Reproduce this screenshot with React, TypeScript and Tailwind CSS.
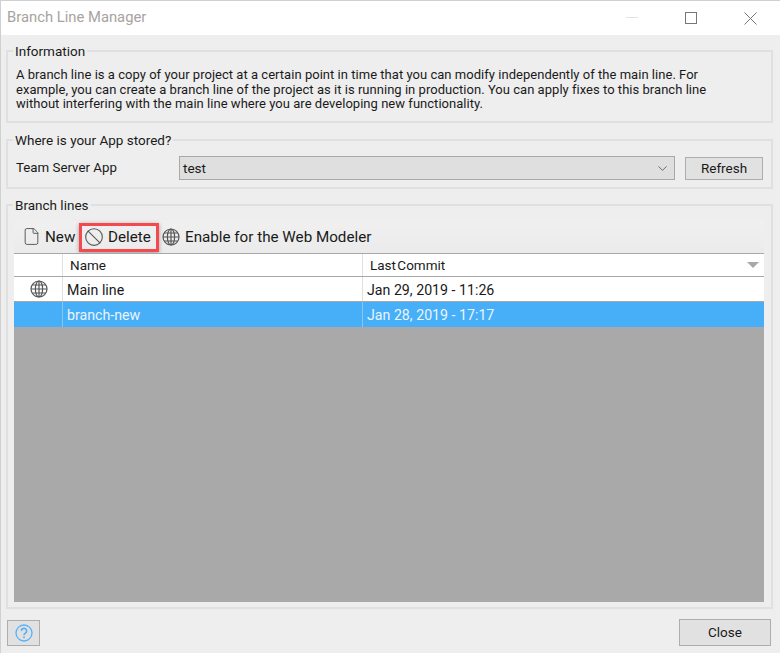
import { ChevronDown, File, Ban } from 'lucide-react';
import type { ReactNode } from 'react';

function GlobeIcon() {
  return (
    <svg width="18" height="18" viewBox="0 0 18 18" fill="none" stroke="#555555" strokeWidth="1.2">
      <circle cx="9" cy="9" r="8" />
      <ellipse cx="9" cy="9" rx="3.6" ry="8" />
      <path d="M9 1v16M1 9h16M2.2 5h13.6M2.2 13h13.6" />
    </svg>
  );
}

function Group({ title, className, children }: { title: string; className: string; children: ReactNode }) {
  return (
    <div className={`relative border-2 border-[#e0e0e0] ${className}`}>
      <span className="absolute left-[5px] top-[-9px] bg-[#eeeeee] px-[2px] text-[13.5px] leading-[16px] text-[#1a1a1a]">{title}</span>
      {children}
    </div>
  );
}

export default function App() {
  return (
    <div className="w-[780px] h-[653px] flex flex-col bg-[#eeeeee] border-t border-l border-[#d0d0d0] text-[14px] font-['Roboto','Noto_Sans',sans-serif] overflow-hidden">
      {/* Title bar */}
      <div className="h-[34px] shrink-0 bg-white flex items-center justify-between pl-[6px]">
        <span className="text-[14.8px] pb-[2px] text-[#a8a3a0]">Branch Line Manager</span>
        <div className="flex items-center">
          <div className="w-[12px] h-px bg-[#e4e4e4] mr-[47px] mb-[2px]" />
          <div className="w-[12px] h-[12px] border border-[#777777] mr-[47px]" />
          <svg width="13" height="13" viewBox="0 0 13 13" stroke="#777777" strokeWidth="1" className="mr-[23px]">
            <path d="M0.5 0.5l12 12M12.5 0.5l-12 12" />
          </svg>
        </div>
      </div>

      {/* Body */}
      <div className="flex-1 flex flex-col pl-[5px] pt-[15px]">
        <Group title="Information" className="h-[73px] w-[767px] pl-[8px] pt-[16px]">
          <p className="text-[13px] tracking-[0.03px] leading-[14.5px] text-[#1a1a1a] whitespace-nowrap">
            A branch line is a copy of your project at a certain point in time that you can modify independently of the main line. For
            <br />
            example, you can create a branch line of the project as it is running in production. You can apply fixes to this branch line
            <br />
            without interfering with the main line where you are developing new functionality.
          </p>
        </Group>

        <Group title="Where is your App stored?" className="h-[50px] w-[767px] mt-[16px] flex items-center pl-[8px] pt-[8px]">
          <span className="w-[163px] text-[13.3px] text-[#1a1a1a]">Team Server App</span>
          <div className="w-[496px] h-[24px] bg-[#dfdfdf] border border-[#a8a8a8] flex items-center justify-between pl-[3px] pr-[4px] text-[13.5px] text-[#1a1a1a]">
            test
            <ChevronDown size={15} strokeWidth={1.2} color="#444444" />
          </div>
          <button className="ml-[10px] w-[78px] h-[23px] bg-[#e1e1e1] border border-[#adadad] text-[13.5px] text-[#1a1a1a]">Refresh</button>
        </Group>

        <Group title="Branch lines" className="h-[405px] w-[767px] mt-[15px] pl-[6px] pr-[7px] pt-[15px]">
          {/* Toolbar */}
          <div className="h-[32px] flex items-center bg-gradient-to-b from-[#f0f0f0] to-[#ebebeb] text-[15.2px] text-[#1a1a1a]">
            <div className="flex items-center gap-[4px] pl-[8px] w-[65px]">
              <File size={19} strokeWidth={1.2} color="#555555" />
              <span className="pt-px">New</span>
            </div>
            <div className="flex items-center gap-[4px] w-[80px] h-[29px] pl-[2px] border-[3px] border-[#f4494f] shadow-[0_1px_4px_rgba(0,0,0,0.35)]">
              <Ban size={20} strokeWidth={1.3} color="#555555" />
              <span className="pt-px">Delete</span>
            </div>
            <div className="flex items-center gap-[5px] pl-[3px]">
              <GlobeIcon />
              <span className="pt-px">Enable for the Web Modeler</span>
            </div>
          </div>

          {/* Table */}
          <div className="h-[349px] flex flex-col bg-[#a9a9a9] text-[14.2px]">
            <div className="h-[24px] shrink-0 flex items-center bg-white border-t border-b border-[#a8a8a8] text-[13.5px] text-[#1a1a1a]">
              <div className="w-[49px] h-full border-r border-[#e0e0e0]" />
              <div className="w-[300px] h-full flex items-center pl-[7px] border-r border-[#e0e0e0]">Name</div>
              <div className="flex-1 flex items-center justify-between pl-[7px] pr-[5px]">
                <span className="[word-spacing:-2px]">Last Commit</span>
                <div className="w-0 h-0 border-x-[6px] border-x-transparent border-t-[6px] border-t-[#a8a8a8]" />
              </div>
            </div>
            <div className="h-[25px] shrink-0 flex items-center bg-white border-b border-[#a8a8a8] text-[#1a1a1a]">
              <div className="w-[49px] h-full flex items-center justify-center pl-px border-r border-[#e0e0e0]">
                <GlobeIcon />
              </div>
              <div className="w-[300px] h-full flex items-center pl-[4px] pt-[3px] border-r border-[#e0e0e0]">Main line</div>
              <div className="pl-[4px] pt-[3px]">Jan 29, 2019 - 11:26</div>
            </div>
            <div className="h-[25px] shrink-0 flex items-center bg-[#47aef8] text-[#eaf5fe]">
              <div className="w-[49px] h-full border-r border-[#8cc4ea]" />
              <div className="w-[300px] h-full flex items-center pl-[4px] pt-[3px] border-r border-[#8cc4ea]">branch-new</div>
              <div className="pl-[4px] pt-[3px]">Jan 28, 2019 - 17:17</div>
            </div>
          </div>
        </Group>

        {/* Footer */}
        <div className="flex items-center justify-between mt-[10px] pl-[1px] w-[765px]">
          <button className="w-[33px] h-[26px] bg-[#e1e1e1] border border-[#adadad] flex items-center justify-center">
            <svg width="18" height="18" viewBox="0 0 18 18" fill="none" stroke="#55b2fa" strokeWidth="1.3">
              <circle cx="9" cy="9" r="8" />
              <path d="M6.4 7a2.6 2.6 0 1 1 3.9 2.2c-.9.5-1.3 1-1.3 2" strokeWidth="1.6" />
              <path d="M9 12.6v1.6" strokeWidth="1.6" />
            </svg>
          </button>
          <button className="w-[92px] h-[27px] bg-[#e1e1e1] border border-[#adadad] text-[13.5px] text-[#1a1a1a]">Close</button>
        </div>
      </div>
    </div>
  );
}
